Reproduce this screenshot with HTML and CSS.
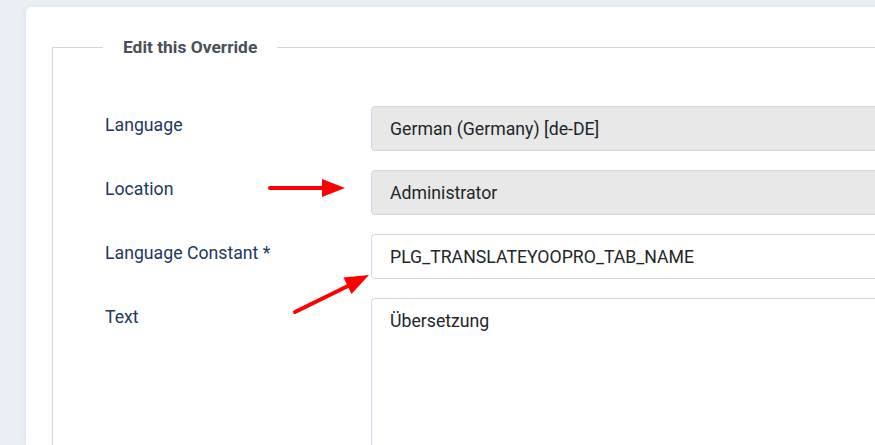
FILE: index.html
```html
<!DOCTYPE html>
<html lang="en">
<head>
    <meta charset="UTF-8">
    <meta name="viewport" content="width=device-width, initial-scale=1.0">
    <title>Edit this Override</title>
    <link rel="stylesheet" href="styles.css">
</head>
<body>
    <div class="page">
        <div class="card">
            <fieldset class="options">
                <legend>Edit this Override</legend>
                <div class="row">
                    <label for="language">Language</label>
                    <input type="text" id="language" class="field" value="German (Germany) [de-DE]" disabled>
                </div>
                <div class="row">
                    <label for="location">Location</label>
                    <input type="text" id="location" class="field" value="Administrator" disabled>
                </div>
                <div class="row">
                    <label for="constant">Language Constant *</label>
                    <input type="text" id="constant" class="field" value="PLG_TRANSLATEYOOPRO_TAB_NAME">
                </div>
                <div class="row">
                    <label for="text">Text</label>
                    <textarea id="text" class="field area">Übersetzung</textarea>
                </div>
            </fieldset>
        </div>
    </div>

    <svg class="marks" width="875" height="445" viewBox="0 0 875 445">
        <line x1="270" y1="188" x2="325" y2="188" stroke="#ff0000" stroke-width="4" stroke-linecap="round"/>
        <polygon points="322,179 345,188 322,197" fill="#ff0000"/>
        <line x1="295" y1="312" x2="350" y2="285" stroke="#ff0000" stroke-width="4" stroke-linecap="round"/>
        <polygon points="351.5,294 369,275 343.5,277.5" fill="#ff0000"/>
    </svg>
</body>
</html>
```

FILE: styles.css
```css
body {
    margin: 0;
    background-color: #eaeff5;
    font-family: Roboto, "Liberation Sans", sans-serif;
    overflow: hidden;
}
.page {
    padding: 7px 0 0 26px;
    height: 438px;
}
.card {
    width: 1000px;
    height: 100%;
    background: white;
    border-radius: 5px 0 0 0;
    padding: 28px 0 0 26px;
    box-sizing: border-box;
    box-shadow: -2px 0 6px rgba(30, 60, 110, 0.06);
}
.options {
    margin: 0;
    padding: 47px 0 0 52px;
    border: 1px solid #c9d7e8;
    min-height: 500px;
}
.options legend {
    margin-left: -2px;
    padding: 0 20px;
    font-size: 17.4px;
    line-height: 24px;
    font-weight: bold;
    color: #4a5058;
}
.row {
    display: grid;
    grid-template-columns: 266px 1fr;
    margin-bottom: 19px;
}
.row label {
    padding-top: 7px;
    font-size: 17.7px;
    line-height: 24px;
    color: #22385c;
}
.field {
    height: 45px;
    box-sizing: border-box;
    padding: 0 18px;
    border: 1px solid #cdd9e6;
    border-radius: 4px;
    background: white;
    font-family: Roboto, "Liberation Sans", sans-serif;
    font-size: 17.7px;
    color: #22262a;
}
.field:disabled {
    background-color: #e8e8e8;
    color: #22262a;
    -webkit-text-fill-color: #22262a;
    opacity: 1;
}
.area {
    height: 200px;
    padding: 10px 18px;
    line-height: 24px;
    resize: none;
}
.marks {
    position: absolute;
    left: 0;
    top: 0;
    pointer-events: none;
}
```
